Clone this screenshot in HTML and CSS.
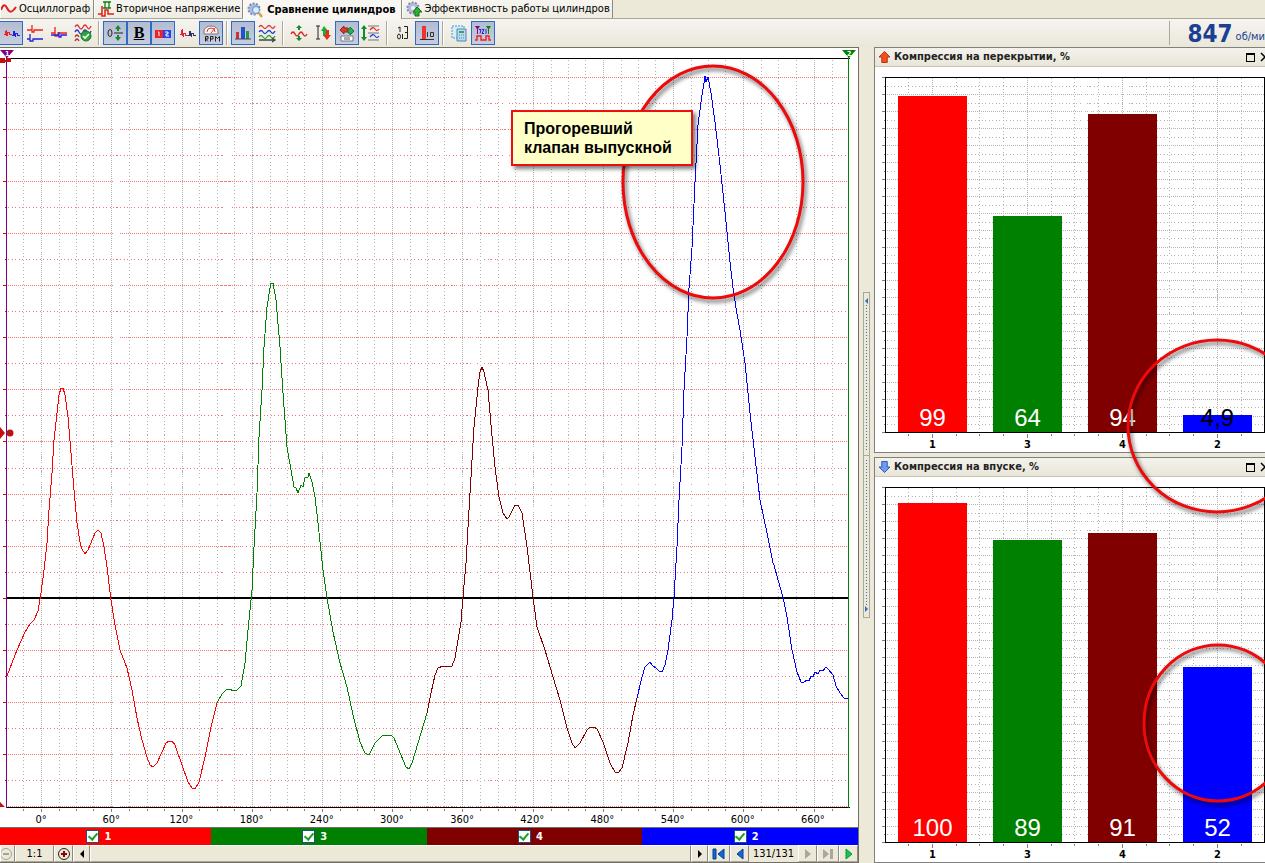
FILE: index.html
```html
<!DOCTYPE html>
<html lang="ru">
<head>
<meta charset="utf-8">
<title>Сравнение цилиндров</title>
<link rel="stylesheet" href="styles.css">
</head>
<body>
<div class="app">
  <nav class="tabs" role="tablist">
    <button class="tab tab-first" role="tab"><svg class="tab-icon" viewBox="0 0 16 16"><path d="M0 9C2 3 4 3 6 7S10 13 15 6" fill="none" stroke="#e02020" stroke-width="2"/></svg>Осциллограф</button>
    <button class="tab" role="tab"><svg class="tab-icon" viewBox="0 0 16 16"><path d="M0 13h4V5v10h3V9h3v4h6" fill="none" stroke="#e02010" stroke-width="1.5"/><path d="M5 1h8M5 7h8M7 1v6M11 1v6" stroke="#108010" stroke-width="1.3"/></svg>Вторичное напряжение</button>
    <button class="tab tab-active" role="tab" aria-selected="true"><svg class="tab-icon" viewBox="0 0 16 16"><circle cx="7" cy="7" r="5.5" fill="#b9c0dd" stroke="#8088b8" stroke-width="2" stroke-dasharray="2 1.4"/><circle cx="7" cy="7" r="4.5" fill="#aeb8dc"/><circle cx="9" cy="8" r="3.5" fill="#d9f0fb" stroke="#5b93c8"/><path d="M12 11l3 4" stroke="#e59a4c" stroke-width="2.5"/></svg>Сравнение цилиндров</button>
    <button class="tab" role="tab"><svg class="tab-icon" viewBox="0 0 16 16"><circle cx="7" cy="7" r="5.5" fill="#b9c0dd" stroke="#8088b8" stroke-width="2" stroke-dasharray="2 1.4"/><circle cx="7" cy="7" r="4.5" fill="#b4bbdc"/><circle cx="7" cy="7" r="2" fill="#f4f3ee"/><path d="M11 6l5 5h-3v4H9v-4H7z" fill="#30b030" stroke="#157015"/></svg>Эффективность работы цилиндров</button>
  </nav>

  <header class="toolbar">
    <div class="tool-group tool-group-first">
      <button class="tool on" aria-label="Наложение"><svg viewBox="1 1 22 22"><g class="crisp" fill="none"><path d="M4.500 13.500h2v-4M7.500 9v6M8.500 14.500v-3h2v2h2" stroke="#e22"/><path d="M12.500 14.500h2v-5M15.500 10v5M16.500 15.500v-3h2v2h2" stroke="#22d"/></g></svg></button>
      <button class="tool" aria-label="Раздельно"><svg viewBox="1 1 22 22"><g fill="none" stroke-width="1.3"><path d="M4 9h5V4v7h2V9h9" stroke="#e22"/><path d="M4 18h3v-5v7h3v-2h10" stroke="#22d"/></g></svg></button>
      <button class="tool" aria-label="Общая база"><svg viewBox="1 1 22 22"><g fill="none" stroke-width="1.3"><path d="M4 12h4V6v9h3v-3h9" stroke="#e22"/><path d="M4 14h8v-3v5h2v-2h6" stroke="#22d"/></g></svg></button>
      <button class="tool" aria-label="Выбор кривых"><svg viewBox="1 1 22 22"><g fill="none" stroke-width="1.3"><path d="M4 6q2-4 4 0t4 0 4 0 4-1" stroke="#d33"/><path d="M4 11q2-4 4 0t4 0 4 0 4-1" stroke="#23c"/><path d="M4 16q2-4 4 0M4 20q2-4 4 0" stroke="#a33"/></g><circle cx="15" cy="15" r="5" fill="#2ca33c" stroke="#167826"/><path d="M12 15l2 2 4-4" fill="none" stroke="#fff" stroke-width="1.6"/></svg></button>
    </div>
    <div class="tool-group">
      <button class="tool on" aria-label="Ноль"><svg viewBox="1 1 22 22"><ellipse cx="7" cy="12" rx="2" ry="3.5" fill="none" stroke="#222"/><path d="M11 12h9" stroke="#222"/><path d="M15 4l3 4h-2v2h-2V8h-2zM15 20l3-4h-2v-2h-2v2h-2z" fill="#128a2a"/></svg></button>
      <button class="tool on tool-b" aria-label="Жирная линия">B</button>
      <button class="tool on" aria-label="Номера"><svg viewBox="1 1 22 22"><path d="M4 9h8v8H4z" fill="#e22"/><path d="M12 9h8v8h-8z" fill="#24e"/><path d="M7 11h1v4M14 11h3v2h-2v2h3" fill="none" stroke="#fff"/></svg></button>
      <button class="tool" aria-label="Сравнить"><svg viewBox="1 1 22 22"><g class="crisp" fill="none"><path d="M4.500 13.500h2v-5M7.500 8v7M8.500 15.500v-3h2v2h2" stroke="#d24"/><path d="M12.500 14.500h2v-5M15.500 10v5M16.500 15.500v-3h2v2h2" stroke="#336"/></g></svg></button>
      <button class="tool on" aria-label="Обороты"><svg viewBox="1 1 22 22"><path d="M5 13V10a7 5 0 0 1 14 0v3z" fill="#f6f6f6" stroke="#777"/><path d="M12 12l4-5M8 11a4 4 0 0 1 8 0" fill="none" stroke="#e33"/><path d="M6.500 20.500v-5h2.500v2.500h-2.500l2.500 2.500M11.500 20.500v-5h2.500v2.500h-2.500M16.500 20.500v-5l2 2 2-2v5" fill="none" stroke="#222"/></svg></button>
    </div>
    <div class="tool-group">
      <button class="tool on" aria-label="Гистограмма"><svg viewBox="1 1 22 22"><path d="M5 11h3v7H5z" fill="#c33"/><path d="M10 6h4v12h-4z" fill="#2550cc"/><path d="M15 10h3v8h-3z" fill="#279a3a"/><path d="M4 18h16" stroke="#446"/></svg></button>
      <button class="tool" aria-label="Кривые"><svg viewBox="1 1 22 22"><g fill="none" stroke-width="1.3"><path d="M4 6q2-3 4 0t4 0 4 0 4-1" stroke="#d33"/><path d="M4 11q2-3 4 0t4 0 4 0 4-1" stroke="#23c"/><path d="M4 16q2-3 4 0t4 0 4 0 4-1" stroke="#2a3"/><path d="M4 19h15M17 17l3 2-3 2" stroke="#444"/></g></svg></button>
    </div>
    <div class="tool-group">
      <button class="tool" aria-label="Масштаб"><svg viewBox="1 1 22 22"><path d="M4 13q2-4 4 0t4 0 4 0 4 0" fill="none" stroke="#d22" stroke-width="1.4"/><path d="M12 4l3 3h-2v2h-2V7H9zM12 20l3-3h-2v-2h-2v2H9z" fill="#128a2a"/></svg></button>
      <button class="tool" aria-label="Высота"><svg viewBox="1 1 22 22"><path d="M5 5h4M5 18h4M7 5v13" stroke="#222" fill="none"/><path d="M13 5l4 5h-2v5h-3v-5h-2z" fill="#25a638"/><path d="M16 19l4-5h-2V9h-3v5h-3z" fill="#dc3420"/></svg></button>
      <button class="tool on" aria-label="Смещение"><svg viewBox="1 1 22 22"><path d="M5 9l4-4v2h4v4H9v2z" fill="#dd3822" stroke="#922"/><path d="M19 10l-4-4v2h-2v4h2v2z" fill="#35b040" stroke="#174"/><path d="M6 15h12v5H6z" fill="#fff" stroke="#778"/><path d="M9 16h6v3H9z" fill="#aaa"/></svg></button>
      <button class="tool" aria-label="Интервал"><svg viewBox="1 1 22 22"><path d="M5 4l3 4H6v8h2l-3 4-3-4h2V8H2z" fill="#128a2a"/><path d="M9 5h11M9 12h11M9 19h11" stroke="#777"/><path d="M11 9q3-4 5-1t4 0" fill="none" stroke="#e22" stroke-width="1.300"/><path d="M11 16q3-4 5-1t4 0" fill="none" stroke="#24e" stroke-width="1.300"/></svg></button>
    </div>
    <div class="tool-group">
      <button class="tool" aria-label="Шкала"><svg viewBox="1 1 22 22"><g fill="none" stroke="#222"><path d="M7 7l2-1v5M13 5.500h3.500v12H13M14 11.500h2M11.500 13v5"/><ellipse cx="8" cy="15.500" rx="1.500" ry="2.500"/></g></svg></button>
      <button class="tool on" aria-label="Деления"><svg viewBox="1 1 22 22"><path d="M7 5h4v13H7z" fill="#e33"/><path d="M5 18.500h14M12.500 11v5M15.500 11.500h3v4h-3z" fill="none" stroke="#333"/></svg></button>
    </div>
    <div class="tool-group">
      <button class="tool" aria-label="Расчёт"><svg viewBox="1 1 22 22"><path d="M5 5h12v12H5z" fill="#d8ecf8" stroke="#489ac8" stroke-dasharray="2 1"/><path d="M10 8h9v12h-9z" fill="#b9daf0" stroke="#4a86b0"/><path d="M12 10h5v2h-5z" fill="#3aa55a"/><path d="M12 14h6M12 17h6" stroke="#4a86b0" stroke-dasharray="1 1"/></svg></button>
      <button class="tool on" aria-label="720 градусов"><svg viewBox="1 1 22 22"><path d="M4 5h5l-2 3v5H6V8z" fill="#808"/><path d="M15 5h5l-2 3v5h-1V8z" fill="#080"/><path d="M8 8.500h2l-1 4M11 8.500h2l-2 4h2M15 8v5" fill="none" stroke="#22c"/><path d="M4 19h2v-4h4v4h5v-4h3v4h2" fill="none" stroke="#e22" stroke-width="1.4"/></svg></button>
    </div>
    <div class="rpm"><strong class="rpm-value">847</strong><span>об/ми</span></div>
  </header>

  <main class="workspace">
    <section class="scope">
      <svg class="plot" viewBox="0 48 858 765" preserveAspectRatio="none" role="img" aria-label="График по цилиндрам">
        <g class="crisp" transform="translate(.5 .5)">
          <path class="minor gray" d="M23 59V807M59 59V807M76 59V807M93 59V807M129 59V807M147 59V807M164 59V807M199 59V807M217 59V807M234 59V807M270 59V807M287 59V807M304 59V807M340 59V807M357 59V807M374 59V807M410 59V807M427 59V807M444 59V807M480 59V807M498 59V807M515 59V807M551 59V807M568 59V807M585 59V807M621 59V807M638 59V807M655 59V807M691 59V807M708 59V807M725 59V807M761 59V807M778 59V807M796 59V807M832 59V807"/>
          <path class="major gray" d="M41 59V807M111 59V807M182 59V807M252 59V807M322 59V807M392 59V807M462 59V807M533 59V807M603 59V807M673 59V807M743 59V807M814 59V807"/>
          <path class="minor pink" d="M7 103H848M7 155H848M7 207H848M7 259H848M7 311H848M7 363H848M7 415H848M7 468H848M7 520H848M7 572H848M7 624H848M7 676H848M7 728H848M7 780H848"/>
          <path class="major pink" d="M7 77H848M7 129H848M7 181H848M7 233H848M7 285H848M7 337H848M7 389H848M7 441H848M7 494H848M7 546H848M7 650H848M7 702H848M7 754H848M7 806H848"/>
          <path class="tick-red" d="M2 77h4M2 129h4M2 181h4M2 233h4M2 285h4M2 337h4M2 389h4M2 441h4M2 494h4M2 546h4M2 598h4M2 650h4M2 702h4M2 754h4M4 103h2M4 155h2M4 207h2M4 259h2M4 311h2M4 363h2M4 415h2M4 468h2M4 520h2M4 572h2M4 624h2M4 676h2M4 728h2M4 780h2"/>
          <path class="tick" d="M23 808v2M41 808v3M59 808v2M76 808v2M93 808v2M111 808v3M129 808v2M147 808v2M164 808v2M182 808v3M199 808v2M217 808v2M234 808v2M252 808v3M270 808v2M287 808v2M304 808v2M322 808v3M340 808v2M357 808v2M374 808v2M392 808v3M410 808v2M427 808v2M444 808v2M462 808v3M480 808v2M498 808v2M515 808v2M533 808v3M551 808v2M568 808v2M585 808v2M603 808v3M621 808v2M638 808v2M655 808v2M673 808v3M691 808v2M708 808v2M725 808v2M743 808v3M761 808v2M778 808v2M796 808v2M814 808v3M832 808v2"/>
          <path d="M6 58H849M6 807H849" stroke="#000"/>
        </g>
        <path d="M7 598H848" stroke="#000" stroke-width="2"/>
        <g class="crisp curves">
          <polyline stroke="#f00" points="7,676 17,650 25,632 30,624 34,620 38,611 41,593 44,570 47,543 49,510 52,473 54,440 57,413 59,395 61,388 63,388 65,395 68,417 71,453 74,490 77,523 80,542 82,549 85,554 88,550 93,538 95,533 98,530 101,533 104,547 107,567 111,600 115,625 120,650 127,668 132,690 137,718 142,740 147,757 150,765 153,767 157,763 162,752 166,743 169,741 172,741 175,745 182,765 188,782 192,788 195,789 199,782 205,757 211,727 217,703"/>
          <polyline stroke="#008000" points="217,703 222,694 226,690 230,689 233,691 237,690 241,686 245,663 248,630 252,590 254,547 257,493 259,437 262,390 264,347 267,307 270,288 271,283 273,283 276,300 280,347 283,393 287,447 291,470 294,487 296,488 298,493 301,485 303,487 305,478 308,477 309,473 312,482 315,497 318,523 323,570 327,598 333,632 340,663 347,687 353,715 360,742 365,753 369,755 375,743 382,736 386,735 391,735 394,738 401,755 406,767 409,769 412,763 418,743 427,713"/>
          <polyline stroke="#800000" points="427,713 431,693 435,675 438,668 443,666 450,667 452,666 455,658 458,640 461,622 463,597 466,563 468,527 471,477 474,427 478,387 480,372 482,367 484,372 488,390 491,425 495,467 499,497 503,513 507,519 509,517 512,511 515,505 518,505 522,513 527,547 533,597 537,627 545,650 553,677 560,700 567,728 572,743 575,748 580,743 587,730 590,727 594,727 597,729 603,742 610,763 615,772 618,773 622,768 628,743 633,715 637,698"/>
          <polyline stroke="#00f" points="637,698 642,677 645,667 648,664 650,662 653,666 656,668 659,671 662,672 665,665 668,650 672,620 674,597 677,547 679,500 682,447 684,390 687,337 689,288 692,248 695,182 698,125 702,95 704,83 705,76 706,82 708,77 711,93 715,122 720,165 725,212 730,262 733,288 737,314 740,330 745,363 750,413 755,457 760,500 767,533 773,563 774,565 778,580 783,597 787,617 792,650 797,672 801,682 804,682 807,680 809,681 811,676 813,677 815,672 818,674 820,670 823,671 826,667 828,669 833,675 836,686 840,693 844,698 848,698"/>
        </g>
        <path d="M6 54V808" class="crisp" stroke="#800080" stroke-width="1" transform="translate(.5 0)"/>
        <path d="M848 54V808" class="crisp" stroke="#008000" stroke-width="1" transform="translate(.5 0)"/>
        <path d="M0 50H14L7 58z" fill="#800080"/>
        <path d="M842 50H856L849 58z" fill="#008000"/>
        <g class="marker-text"><text x="5" y="56">1</text><text x="847" y="56">2</text></g>
        <path d="M0 58h5v5H0zM5 60h5v2H5zM7 58h4v4H7zM0 427l5 6-5 6zM0 802l5 5H0z" fill="#c01010"/>
        <circle cx="10" cy="433" r="3.5" fill="#b81414"/>
      </svg>
      <div class="degrees"><span>0°</span><span>60°</span><span>120°</span><span>180°</span><span>240°</span><span>300°</span><span>360°</span><span>420°</span><span>480°</span><span>540°</span><span>600°</span><span>660°</span></div>
      <div class="cylinders">
        <label class="cyl c1"><input type="checkbox" checked>1</label>
        <label class="cyl c3"><input type="checkbox" checked>3</label>
        <label class="cyl c4"><input type="checkbox" checked>4</label>
        <label class="cyl c2"><input type="checkbox" checked>2</label>
      </div>
      <div class="navbar">
        <button class="nav w-zoom-out" aria-label="Уменьшить" disabled><svg viewBox="0 0 14 14"><circle cx="5" cy="7" r="5.5" fill="none" stroke="#a5a294"/><path d="M2 7h6" stroke="#a5a294" stroke-width="2"/></svg></button>
        <button class="nav w-ratio">1:1</button>
        <button class="nav w-icon" aria-label="Увеличить"><svg viewBox="0 0 14 14"><circle cx="7" cy="7" r="5.5" fill="none" stroke="#222"/><path d="M4 7h6M7 4v6" stroke="#900" stroke-width="2"/></svg></button>
        <button class="nav w-arrow" aria-label="Влево"><svg viewBox="0 0 14 14"><path d="M9 3v8L5 7z"/></svg></button>
        <div class="track"></div>
        <button class="nav w-arrow" aria-label="Вправо"><svg viewBox="0 0 14 14"><path d="M5 3v8l4-4z"/></svg></button>
        <button class="nav w-end" aria-label="Первый"><svg viewBox="0 0 14 14"><path d="M1 2h3v10H1zM12 2v10L6 7z" fill="#1268d8" stroke="#083a90"/></svg></button>
        <button class="nav w-icon" aria-label="Предыдущий"><svg viewBox="0 0 14 14"><path d="M10 2v10L4 7z" fill="#1268d8" stroke="#083a90"/></svg></button>
        <span class="counter">131/131</span>
        <button class="nav w-icon" aria-label="Следующий" disabled><svg viewBox="0 0 14 14"><path d="M4 2v10l6-5z" fill="#a9a69c"/></svg></button>
        <button class="nav w-end" aria-label="Последний" disabled><svg viewBox="0 0 14 14"><path d="M2 2v10l6-5zM9 2h3v10H9z" fill="#a9a69c"/></svg></button>
        <button class="nav w-icon" aria-label="Пуск"><svg viewBox="0 0 14 14"><path d="M4 2v10l6-5z" fill="#10c850" stroke="#0a9038"/></svg></button>
      </div>
    </section>

    <div class="gutter">
      <div class="splitter">
        <button class="split" aria-label="Свернуть влево"><svg viewBox="0 0 5 8"><path d="M4 1v6L1 4z"/></svg><i class="dots"></i></button>
        <button class="split" aria-label="Свернуть вправо"><i class="dots"></i><svg viewBox="0 0 5 8"><path d="M1 1v6l3-3z"/></svg></button>
      </div>
    </div>

    <aside class="side">
      <section class="panel">
        <h2 class="panel-head"><svg class="head-icon" viewBox="0 0 12 12"><path d="M6 0l6 6H9v6H3V6H0z" fill="#f2501c" stroke="#b82a10"/></svg><span class="head-title">Компрессия на перекрытии, %</span><button class="win" aria-label="Развернуть"><svg viewBox="0 0 10 10"><path class="crisp" d="M1 1h8v8H1zM1 2h8" fill="none" stroke="#000"/></svg></button><button class="win win-close" aria-label="Закрыть"><svg viewBox="0 0 10 10"><path d="M1 1l8 8M9 1L1 9" stroke="#000" stroke-width="1.5"/></svg></button></h2>
        <div class="chart">
          <svg class="grid-lines" viewBox="0 0 390 385" preserveAspectRatio="none">
            <g id="bar-grid" class="crisp" transform="translate(.5 .5)">
              <path class="minor gray" d="M33 10V365M81 10V365M104 10V365M128 10V365M176 10V365M199 10V365M223 10V365M271 10V365M294 10V365M318 10V365M366 10V365M11 19H389M11 36H389M11 53H389M11 70H389M11 87H389M11 104H389M11 121H389M11 138H389M11 155H389M11 171H389M11 188H389M11 205H389M11 222H389M11 239H389M11 256H389M11 273H389M11 290H389M11 307H389M11 324H389M11 340H389M11 357H389"/>
              <path class="major gray" d="M57 10V365M152 10V365M247 10V365M342 10V365M11 27H389M11 44H389M11 61H389M11 78H389M11 95H389M11 112H389M11 129H389M11 146H389M11 163H389M11 180H389M11 196H389M11 213H389M11 230H389M11 247H389M11 264H389M11 281H389M11 298H389M11 315H389M11 332H389M11 349H389"/>
              <path class="tick" d="M6 10h4M6 27h4M6 44h4M6 61h4M6 78h4M6 95h4M6 112h4M6 129h4M6 146h4M6 163h4M6 180h4M6 196h4M6 213h4M6 230h4M6 247h4M6 264h4M6 281h4M6 298h4M6 315h4M6 332h4M6 349h4M6 365h4M8 19h2M8 36h2M8 53h2M8 70h2M8 87h2M8 104h2M8 121h2M8 138h2M8 155h2M8 171h2M8 188h2M8 205h2M8 222h2M8 239h2M8 256h2M8 273h2M8 290h2M8 307h2M8 324h2M8 340h2M8 357h2M33 366v2M57 366v4M81 366v2M104 366v2M128 366v2M152 366v4M176 366v2M199 366v2M223 366v2M247 366v4M271 366v2M294 366v2M318 366v2M342 366v4M366 366v2"/>
              <path d="M10 10H389V365H10z" fill="none" stroke="#000"/>
            </g>
          </svg>
          <div class="bars">
            <div class="slot"><div class="bar c1" style="height:94.6%">99</div></div>
            <div class="slot"><div class="bar c3" style="height:60.8%">64</div></div>
            <div class="slot"><div class="bar c4" style="height:89.6%">94</div></div>
            <div class="slot"><div class="bar c2 bar-low" style="height:4.8%">4,9</div></div>
            <span class="num">1</span><span class="num">3</span><span class="num">4</span><span class="num">2</span>
          </div>
        </div>
      </section>
      <section class="panel">
        <h2 class="panel-head"><svg class="head-icon" viewBox="0 0 12 12"><path d="M6 12l6-6H9V0H3v6H0z" fill="#6a9cf0" stroke="#2c50b0"/></svg><span class="head-title">Компрессия на впуске, %</span><button class="win" aria-label="Развернуть"><svg viewBox="0 0 10 10"><path class="crisp" d="M1 1h8v8H1zM1 2h8" fill="none" stroke="#000"/></svg></button><button class="win win-close" aria-label="Закрыть"><svg viewBox="0 0 10 10"><path d="M1 1l8 8M9 1L1 9" stroke="#000" stroke-width="1.5"/></svg></button></h2>
        <div class="chart">
          <svg class="grid-lines" viewBox="0 0 390 385" preserveAspectRatio="none"><use href="#bar-grid"/></svg>
          <div class="bars">
            <div class="slot"><div class="bar c1" style="height:95.4%">100</div></div>
            <div class="slot"><div class="bar c3" style="height:85%">89</div></div>
            <div class="slot"><div class="bar c4" style="height:87%">91</div></div>
            <div class="slot"><div class="bar c2" style="height:49.3%">52</div></div>
            <span class="num">1</span><span class="num">3</span><span class="num">4</span><span class="num">2</span>
          </div>
        </div>
      </section>
    </aside>
  </main>

  <svg class="marks" viewBox="0 0 1265 863" preserveAspectRatio="none">
    <ellipse cx="713" cy="182" rx="90" ry="116"/>
    <ellipse cx="1217" cy="426" rx="89" ry="86"/>
    <ellipse cx="1218" cy="723" rx="74" ry="78"/>
  </svg>
  <p class="callout">Прогоревший<br>клапан выпускной</p>
</div>
</body>
</html>
```
FILE: styles.css
```css
* { box-sizing: border-box; }
body {
  margin: 0;
  background: #ece9d8;
  color: #000;
  font: 11px/14px "DejaVu Sans Condensed", "DejaVu Sans", sans-serif;
}
button { font: inherit; color: inherit; margin: 0; padding: 0; }
svg { display: block; }
.app {
  position: relative;
  display: flex;
  flex-direction: column;
  height: 100vh;
  overflow: hidden;
}

/* Tabs */
.tabs { display: flex; height: 19px; border-bottom: 1px solid #aca899; flex: none; }
.tab {
  display: flex;
  align-items: center;
  gap: 2px;
  padding: 0 2px 0 3px;
  border: 0;
  border-right: 1px solid #8d8b80;
  border-left: 1px solid #fff;
  background: linear-gradient(#f6f5f0, #efede2);
  white-space: nowrap;
}
.tab-first { padding-left: 0; padding-right: 3px; }
.tab-active { background: #f8f7f2; font-weight: bold; height: 19px; padding-right: 6px; gap: 4px; }
.tab-icon { width: 16px; height: 16px; flex: none; }

/* Toolbar */
.toolbar {
  display: flex;
  align-items: center;
  height: 28px;
  flex: none;
  background: linear-gradient(#f5f4f0, #eae7d9);
}
.tool-group { display: flex; padding-right: 8px; position: relative; }
.tool-group-first { margin-left: -1px; }
.tool-group:not(:nth-last-child(2))::after {
  content: "";
  position: absolute;
  right: 3px;
  top: 0;
  bottom: 0;
  border-left: 1px solid #aca899;
  border-right: 1px solid #fff;
}
.tool { width: 24px; height: 24px; border: 1px solid transparent; background: none; }
.tool svg { width: 22px; height: 22px; }
.tool.on { border-color: #316ac5; background: linear-gradient(#b3bcd2, #c6cde0); }
.tool-b { font: bold 16px/20px "Liberation Serif", serif; text-decoration: underline; }
.rpm {
  display: flex;
  align-items: flex-end;
  gap: 3px;
  height: 24px;
  margin-left: auto;
  padding-left: 18px;
  border-left: 1px solid #aca899;
  color: #1c3f94;
  line-height: 16px;
  white-space: nowrap;
}
.rpm-value { font-size: 24px; line-height: 22px; }

/* Workspace */
.workspace { display: grid; grid-template-columns: minmax(0, 859fr) 15px minmax(0, 391fr); flex: 1; min-height: 0; }
.scope {
  display: flex;
  flex-direction: column;
  min-height: 0;
  background: #fff;
  border-top: 1px solid #716f64;
  border-right: 1px solid #716f64;
  border-bottom: 1px solid #716f64;
}
.plot { width: 100%; flex: 1; min-height: 0; }
.crisp { shape-rendering: crispEdges; }
.major, .minor, .tick, .tick-red { fill: none; }
.major { stroke-dasharray: 1 1; }
.minor { stroke-dasharray: 1 3 1 2; }
.gray { stroke: #b4b4b4; }
.pink { stroke: #f47878; }
.tick { stroke: #808080; }
.tick-red { stroke: #f00000; }
.curves { fill: none; stroke-width: 1; }
.marker-text { fill: #fff; font: bold 7px "DejaVu Sans Condensed", sans-serif; }
.degrees {
  display: grid;
  grid-template-columns: repeat(12, 1fr);
  height: 15px;
  flex: none;
  padding: 0 10px 0 6px;
  text-align: center;
  border-bottom: 1px solid #716f64;
}
.cylinders {
  display: grid;
  grid-template-columns: repeat(4, 1fr);
  height: 17px;
  flex: none;
  margin-left: -5px;
}
.cyl {
  display: flex;
  align-items: center;
  justify-content: center;
  gap: 5px;
  padding-right: 8px;
  color: #fff;
  font-weight: bold;
}
.c1 { background: #f00; }
.c3 { background: #008000; }
.c4 { background: #800000; }
.c2 { background: #00f; }
.cyl input {
  appearance: none;
  display: grid;
  place-items: center;
  width: 13px;
  height: 13px;
  margin: 0;
  background: #fff;
  border: 1px solid #1c5180;
}
.cyl input:checked::before {
  content: "";
  width: 4px;
  height: 7px;
  margin-bottom: 2px;
  border: solid #21a121;
  border-width: 0 2px 2px 0;
  transform: rotate(40deg);
}
.navbar { display: flex; height: 17px; flex: none; background: #ece9d8; overflow: hidden; }
.nav, .track {
  border: 1px solid;
  border-color: #fff #8d8b80 #aca899 #fff;
  background: #ece9d8;
}
.nav { display: flex; align-items: center; justify-content: center; flex: none; }
.nav svg { width: 14px; height: 14px; flex: none; }
.w-zoom-out { width: 15px; }
.w-ratio { width: 39px; }
.w-icon { width: 19px; }
.w-arrow { width: 17px; }
.w-end { width: 22px; }
.track { flex: 1; }
.counter { width: 49px; flex: none; text-align: center; line-height: 17px; }

/* Splitter */
.gutter { display: flex; flex-direction: column; align-items: center; justify-content: center; }
.splitter { display: flex; flex-direction: column; width: 7px; height: 40%; }
.split {
  display: flex;
  flex-direction: column;
  align-items: center;
  flex: 1;
  padding: 4px 0;
  border: 1px solid #aca899;
  background: #ece9d8;
}
.split + .split { border-top: 0; }
.split svg { width: 5px; height: 8px; fill: #316ac5; }
.dots { flex: 1; width: 1px; background: repeating-linear-gradient(#316ac5 0 1px, transparent 1px 3px); }

/* Side panels */
.side { display: flex; flex-direction: column; gap: 4px; min-height: 0; }
.panel {
  display: flex;
  flex-direction: column;
  flex: 1;
  min-height: 0;
  border: 1px solid #808080;
  border-right: 0;
  background: #fff;
  overflow: hidden;
}
.panel-head {
  display: flex;
  align-items: center;
  flex: none;
  height: 19px;
  margin: 0;
  padding-left: 4px;
  background: linear-gradient(#f3f2ec, #e9e6d8);
  border-bottom: 1px solid #c8c5b4;
  color: #222;
  font-size: 11px;
  white-space: nowrap;
}
.head-icon { width: 11px; height: 12px; margin-right: 4px; }
.head-title { flex: 1; }
.win { border: 0; background: none; flex: none; }
.win svg { width: 10px; height: 10px; }
.win-close { width: 5px; margin-left: 5px; overflow: hidden; }
.chart { display: grid; flex: 1; min-height: 0; }
.grid-lines { grid-area: 1 / 1; width: 100%; height: 100%; min-height: 0; }
.bars {
  grid-area: 1 / 1;
  display: grid;
  grid-template: minmax(0, 1fr) 20px / repeat(4, 1fr);
  padding: 10px 0 0 10px;
  min-height: 0;
}
.slot { display: flex; align-items: flex-end; justify-content: center; min-height: 0; }
.bar {
  display: flex;
  align-items: flex-end;
  justify-content: center;
  width: 72%;
  color: #fff;
  font: 24px/28px "Liberation Sans", Arial, sans-serif;
}
.bar-low { color: #000; }
.num { text-align: center; font-weight: bold; line-height: 26px; }

/* Annotations */
.marks { position: absolute; inset: 0; z-index: 2; width: 100%; height: 100%; pointer-events: none; }
.marks ellipse {
  fill: none;
  stroke: #ee0a0a;
  stroke-width: 3;
  filter: drop-shadow(2px 3px 2px rgba(0, 0, 0, .6));
}
.callout {
  position: absolute;
  z-index: 3;
  left: 511px;
  top: 110px;
  margin: 0;
  padding: 7px 19px 7px 11px;
  border: 2px solid #ee1010;
  background: #ffffc8;
  box-shadow: 3px 3px 4px rgba(0, 0, 0, .5);
  font: bold 16px/19px "Liberation Sans", Arial, sans-serif;
  white-space: nowrap;
}
```
